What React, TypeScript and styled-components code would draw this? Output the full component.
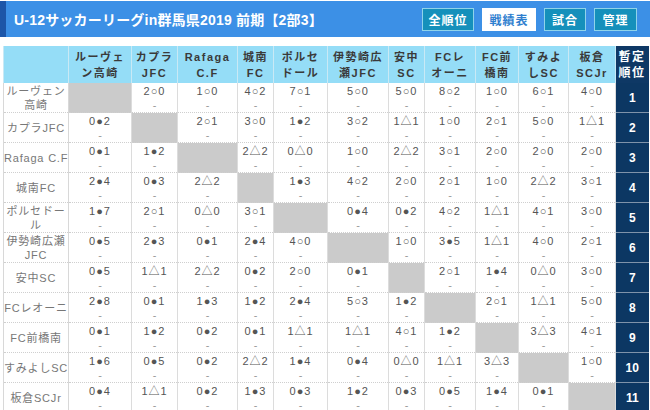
import React from "react";
import styled, { createGlobalStyle } from "styled-components";

const Global = createGlobalStyle`
  html, body { margin: 0; padding: 0; background: #fff; }
  body { font-family: "Liberation Sans", "Noto Sans CJK JP", sans-serif; overflow: hidden; }
`;

const Page = styled.div`
  width: 650px;
  height: 410px;
  overflow: hidden;
  padding-top: 1px;
  box-sizing: border-box;
`;

const TitleBar = styled.header`
  height: 36px;
  background: #3c90e6;
  border-left: 6px solid #1d56a8;
  display: flex;
  align-items: center;
  justify-content: space-between;
  padding: 0 13px 0 8px;
`;

const Title = styled.h1`
  margin: 0;
  color: #fff;
  font-size: 14px;
  font-weight: bold;
  letter-spacing: 0.2px;
`;

const Nav = styled.nav`
  display: flex;
  gap: 8px;
`;

const NavButton = styled.span<{ $active?: boolean; $w: number }>`
  display: inline-flex;
  align-items: center;
  justify-content: center;
  box-sizing: border-box;
  width: ${(p) => p.$w}px;
  height: 23px;
  font-size: 12px;
  font-weight: bold;
  letter-spacing: 1px;
  color: ${(p) => (p.$active ? "#2f7fcf" : "#fff")};
  background: ${(p) => (p.$active ? "#fff" : "#1590bb")};
  border: 1px solid ${(p) => (p.$active ? "#fff" : "#8fd3ea")};
`;

const TableWrap = styled.div`
  padding: 9px 2px 0 3px;
`;

const Table = styled.table`
  border-collapse: collapse;
  table-layout: fixed;
  width: 645px;
  font-size: 11px;
`;

const HeadCell = styled.th<{ $rank?: boolean }>`
  height: 37px;
  padding: 0 1px;
  background: ${(p) => (p.$rank ? "#0e3865" : "#95ddf7")};
  color: ${(p) => (p.$rank ? "#fff" : "#3a3a3a")};
  font-size: ${(p) => (p.$rank ? "12px" : "11px")};
  font-weight: bold;
  letter-spacing: 1.5px;
  line-height: 16px;
  text-align: center;
  border-right: 1px solid ${(p) => (p.$rank ? "#0e3865" : "#c9e9f5")};
  border-left: 1px solid #c9e9f5;
  vertical-align: middle;
  white-space: nowrap;
  overflow: hidden;
`;

const Row = styled.tr`
  height: 29.7px;
  border-bottom: 1px dotted #cfcfcf;
`;

const NameCell = styled.td`
  padding: 0;
  color: #777;
  font-size: 11px;
  letter-spacing: 0.8px;
  line-height: 14px;
  text-align: center;
  white-space: nowrap;
  border-left: 1px solid #d8d8d8;
  border-right: 1px solid #d8d8d8;
  vertical-align: middle;
  overflow: hidden;
`;

const ScoreCell = styled.td<{ $self?: boolean }>`
  padding: 0;
  background: ${(p) => (p.$self ? "#cbcbcb" : "#fff")};
  border-right: 1px solid #dcdcdc;
  text-align: center;
  vertical-align: top;
  color: #555;
`;

const Score = styled.div`
  font-size: 11px;
  letter-spacing: 1px;
  line-height: 14px;
  padding-top: 1px;
`;

const Dash = styled.div`
  font-size: 11px;
  line-height: 14px;
  color: #999;
`;

const RankCell = styled.td`
  background: #0c3763;
  color: #fff;
  font-weight: bold;
  font-size: 12px;
  text-align: center;
  vertical-align: middle;
  border-bottom: 1px solid #7f93aa;
`;

const widths = [65, 63, 46, 60, 36, 54, 61, 36, 51, 43, 50, 47, 33];

const headers: string[][] = [
  ["ルーヴェ", "ン高崎"],
  ["カプラ", "JFC"],
  ["Rafaga", "C.F"],
  ["城南", "FC"],
  ["ポルセ", "ドール"],
  ["伊勢崎広", "瀬JFC"],
  ["安中", "SC"],
  ["FCレ", "オーニ"],
  ["FC前", "橋南"],
  ["すみよ", "しSC"],
  ["板倉", "SCJr"],
];

const teams: { name: string[]; results: string[] }[] = [
  { name: ["ルーヴェン", "高崎"], results: ["", "2○0", "1○0", "4○2", "7○1", "5○0", "5○0", "8○2", "1○0", "6○1", "4○0"] },
  { name: ["カプラJFC"], results: ["0●2", "", "2○1", "3○0", "1●2", "3○2", "1△1", "1○0", "2○1", "5○0", "1△1"] },
  { name: ["Rafaga C.F"], results: ["0●1", "1●2", "", "2△2", "0△0", "1○0", "2△2", "3○1", "2○0", "2○0", "2○0"] },
  { name: ["城南FC"], results: ["2●4", "0●3", "2△2", "", "1●3", "4○2", "2○0", "2○1", "1○0", "2△2", "3○1"] },
  { name: ["ポルセドー", "ル"], results: ["1●7", "2○1", "0△0", "3○1", "", "0●4", "0●2", "4○2", "1△1", "4○1", "3○0"] },
  { name: ["伊勢崎広瀬", "JFC"], results: ["0●5", "2●3", "0●1", "2●4", "4○0", "", "1○0", "3●5", "1△1", "4○0", "2○1"] },
  { name: ["安中SC"], results: ["0●5", "1△1", "2△2", "0●2", "2○0", "0●1", "", "2○1", "1●4", "0△0", "3○0"] },
  { name: ["FCレオーニ"], results: ["2●8", "0●1", "1●3", "1●2", "2●4", "5○3", "1●2", "", "2○1", "1△1", "5○0"] },
  { name: ["FC前橋南"], results: ["0●1", "1●2", "0●2", "0●1", "1△1", "1△1", "4○1", "1●2", "", "3△3", "4○1"] },
  { name: ["すみよしSC"], results: ["1●6", "0●5", "0●2", "2△2", "1●4", "0●4", "0△0", "1△1", "3△3", "", "1○0"] },
  { name: ["板倉SCJr"], results: ["0●4", "1△1", "0●2", "1●3", "0●3", "1●2", "0●3", "0●5", "1●4", "0●1", ""] },
];

const Lines = ({ parts }: { parts: string[] }) => (
  <>
    {parts.map((p, i) => (
      <React.Fragment key={i}>
        {i > 0 && <br />}
        {p}
      </React.Fragment>
    ))}
  </>
);

const navItems = [
  { label: "全順位", w: 52 },
  { label: "戦績表", w: 54, active: true },
  { label: "試合", w: 42 },
  { label: "管理", w: 43 },
];

export default function App() {
  return (
    <>
      <Global />
      <Page>
        <TitleBar>
          <Title>U-12サッカーリーグin群馬県2019 前期【2部3】</Title>
          <Nav>
            {navItems.map((n) => (
              <NavButton key={n.label} $w={n.w} $active={n.active}>
                {n.label}
              </NavButton>
            ))}
          </Nav>
        </TitleBar>
        <TableWrap>
          <Table>
            <colgroup>
              {widths.map((w, i) => (
                <col key={i} style={{ width: w }} />
              ))}
            </colgroup>
            <thead>
              <tr>
                <HeadCell />
                {headers.map((h, i) => (
                  <HeadCell key={i}>
                    <Lines parts={h} />
                  </HeadCell>
                ))}
                <HeadCell $rank>
                  暫定
                  <br />
                  順位
                </HeadCell>
              </tr>
            </thead>
            <tbody>
              {teams.map((t, r) => (
                <Row key={r}>
                  <NameCell>
                    <Lines parts={t.name} />
                  </NameCell>
                  {t.results.map((s, c) =>
                    c === r ? (
                      <ScoreCell key={c} $self />
                    ) : (
                      <ScoreCell key={c}>
                        <Score>{s}</Score>
                        <Dash>-</Dash>
                      </ScoreCell>
                    )
                  )}
                  <RankCell>{r + 1}</RankCell>
                </Row>
              ))}
            </tbody>
          </Table>
        </TableWrap>
      </Page>
    </>
  );
}
